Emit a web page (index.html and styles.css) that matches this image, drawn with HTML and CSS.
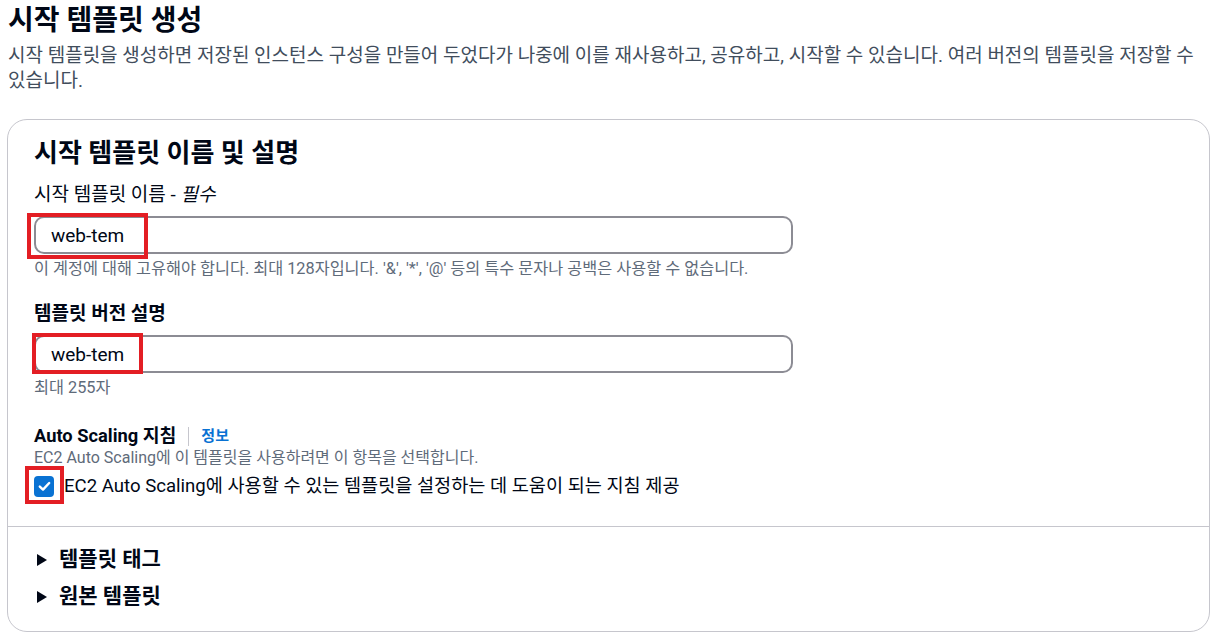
FILE: index.html
```html
<!DOCTYPE html>
<html lang="ko">
  <head>
    <meta charset="UTF-8" />
    <meta name="viewport" content="width=device-width, initial-scale=1.0" />
    <title>시작 템플릿 생성</title>
    <link rel="stylesheet" href="styles.css">
  </head>
  <body>
    <div class="page">
      <h1>시작 템플릿 생성</h1>
      <p class="intro">
        시작 템플릿을 생성하면 저장된 인스턴스 구성을 만들어 두었다가 나중에 이를 재사용하고, 공유하고, 시작할 수 있습니다. 여러 버전의 템플릿을 저장할 수 있습니다.
      </p>

      <div class="card">
        <div class="card-body">
          <h2>시작 템플릿 이름 및 설명</h2>

          <div class="field">
            <label class="label" for="tpl-name">시작 템플릿 이름 - <i>필수</i></label>
            <div class="input-wrap">
              <input id="tpl-name" class="input" type="text" value="web-tem" />
              <span class="mark mark-name"></span>
            </div>
            <div class="hint">이 계정에 대해 고유해야 합니다. 최대 128자입니다. '&amp;', '*', '@' 등의 특수 문자나 공백은 사용할 수 없습니다.</div>
          </div>

          <div class="field field-desc">
            <label class="label label-bold" for="tpl-desc">템플릿 버전 설명</label>
            <div class="input-wrap">
              <input id="tpl-desc" class="input" type="text" value="web-tem" />
              <span class="mark mark-desc"></span>
            </div>
            <div class="hint">최대 255자</div>
          </div>

          <div class="field field-asg">
            <div class="label-row">
              <span class="asg-title">Auto Scaling 지침</span>
              <span class="sep"></span>
              <a class="info" href="#">정보</a>
            </div>
            <div class="hint hint-top">EC2 Auto Scaling에 이 템플릿을 사용하려면 이 항목을 선택합니다.</div>
            <label class="check-row">
              <span class="check-box">
                <svg width="13" height="11" viewBox="0 0 13 11">
                  <path d="M1.8 5.6 L5 8.6 L11.2 2" fill="none" stroke="#fff" stroke-width="2.4" stroke-linecap="round" stroke-linejoin="round"/>
                </svg>
                <span class="mark mark-check"></span>
              </span>
              <span>EC2 Auto Scaling에 사용할 수 있는 템플릿을 설정하는 데 도움이 되는 지침 제공</span>
            </label>
          </div>
        </div>

        <div class="card-foot">
          <div class="expander"><span class="caret"></span>템플릿 태그</div>
          <div class="expander"><span class="caret"></span>원본 템플릿</div>
        </div>
      </div>
    </div>
  </body>
</html>
```

FILE: styles.css
```css
body {
  margin: 0;
  font-family: Roboto, "Noto Sans CJK KR", sans-serif;
  color: #000716;
  background: #fff;
  word-break: keep-all;
}
.page {
  padding: 0 2px 0 7px;
}
h1 {
  margin: 0;
  padding-left: 1px;
  font-size: 28px;
  line-height: 42px;
  font-weight: 700;
}
.intro {
  margin: 1px 0 0;
  padding-left: 1px;
  font-size: 19px;
  line-height: 25px;
  color: #414d5c;
}
.card {
  margin-top: 26px;
  border: 1px solid #c6c6cd;
  border-radius: 20px;
}
.card-body {
  padding: 16px 26px 27px;
  border-bottom: 1px solid #c6c6cd;
}
h2 {
  margin: 0;
  font-size: 26px;
  line-height: 34px;
  font-weight: 700;
}
.field {
  margin-top: 12px;
}
.label {
  display: block;
  font-size: 19px;
  line-height: 26px;
}
.label i {
  font-style: italic;
}
.label-bold {
  font-weight: 700;
}
.input-wrap {
  position: relative;
  width: 759px;
  margin-top: 8px;
}
.input {
  display: block;
  box-sizing: border-box;
  width: 100%;
  height: 38px;
  padding: 0 15px;
  border: 2px solid #8c8c94;
  border-radius: 10px;
  font-family: inherit;
  font-size: 19px;
  color: #000716;
  background: #fff;
}
.mark {
  position: absolute;
  box-sizing: border-box;
  border: 4px solid #e31e24;
  pointer-events: none;
}
.mark-name {
  left: -7px;
  top: -3px;
  width: 121px;
  height: 46px;
}
.mark-desc {
  left: -2px;
  top: -2px;
  width: 111px;
  height: 41px;
}
.hint {
  margin-top: 4px;
  font-size: 16.3px;
  line-height: 22px;
  color: #5f6b7a;
}
.field-desc {
  margin-top: 21px;
}
.field-asg {
  margin-top: 25px;
}
.label-row {
  display: flex;
  align-items: center;
  gap: 12px;
  line-height: 24px;
}
.asg-title {
  font-size: 18.3px;
  font-weight: 700;
}
.sep {
  width: 1px;
  height: 19px;
  background: #c6c6cd;
}
.info {
  font-size: 15px;
  font-weight: 700;
  color: #0972d3;
  text-decoration: none;
}
.hint-top {
  margin-top: 0;
  font-size: 16px;
  line-height: 20px;
}
.check-row {
  display: flex;
  align-items: center;
  gap: 10px;
  margin-top: 5px;
  font-size: 18.6px;
  line-height: 26px;
}
.check-box {
  position: relative;
  display: flex;
  align-items: center;
  justify-content: center;
  width: 20px;
  height: 21px;
  border-radius: 4px;
  background: #0972d3;
  flex-shrink: 0;
}
.mark-check {
  left: -9px;
  top: -10px;
  width: 39px;
  height: 38px;
}
.card-foot {
  padding: 14px 26px 16px;
}
.expander {
  display: flex;
  align-items: center;
  font-size: 21px;
  line-height: 37px;
  font-weight: 700;
}
.caret {
  width: 0;
  height: 0;
  margin: 0 12px 0 3px;
  border-left: 10px solid #000716;
  border-top: 6.5px solid transparent;
  border-bottom: 6.5px solid transparent;
}
```
